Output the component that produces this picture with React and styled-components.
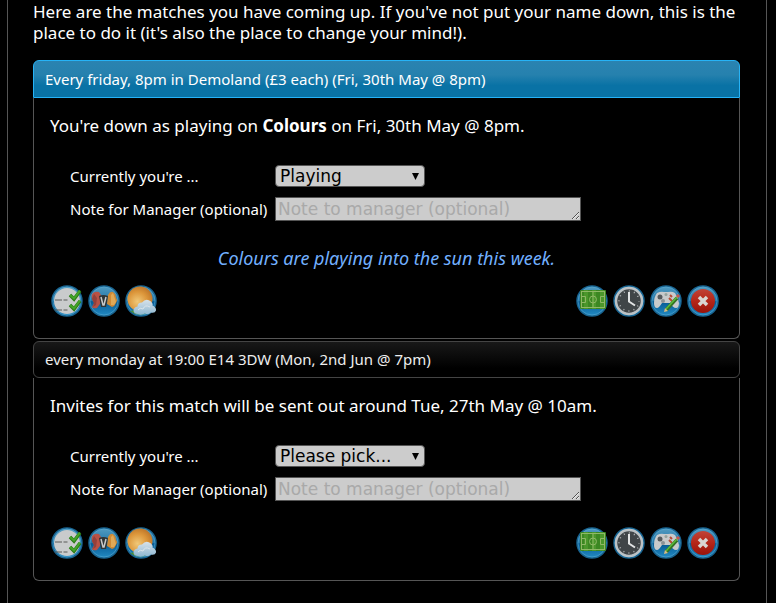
import React from "react";
import styled, { createGlobalStyle, css } from "styled-components";

const GlobalStyle = createGlobalStyle`
  *, *::before, *::after { box-sizing: border-box; }
  html { background: #000; }
  body {
    margin: 0;
    background: #000;
    color: #fff;
    font-family: "Noto Sans", "Open Sans", sans-serif;
    font-size: 17px;
  }
`;

const Page = styled.main`
  min-height: 100vh;
  margin: 0 9px 0 7px;
  padding: 1px 26px 22px 25px;
  border: solid #555;
  border-width: 0 1px;
`;

const Intro = styled.p`
  margin: 0 0 17px;
  line-height: 21px;
`;

const Matches = styled.div`
  display: flex;
  flex-direction: column;
  gap: 2px;
`;

const Match = styled.section``;

const MatchHeader = styled.h2`
  margin: 0;
  padding: 0 11px;
  font-size: 15px;
  font-weight: 400;
  line-height: 35px;
  border: 1px solid #444;
  border-radius: 6px;
  background: linear-gradient(#181818, #000 75%);
  color: #eee;

  ${(p) =>
    p.$active &&
    css`
      line-height: 36px;
      border-color: #26b3f7;
      border-radius: 6px 6px 0 0;
      background: linear-gradient(#2a83b1 0%, #2681ae 38%, #0972a5 68%, #0972a5 100%);
      color: #fff;
    `}
`;

const MatchBody = styled.div`
  padding: 17px 16px 20px;
  border: 1px solid #555;
  border-top: 0;
  border-radius: 0 0 6px 6px;
`;

const Summary = styled.p`
  margin: 0;
  line-height: 22px;
`;

const Form = styled.form`
  display: grid;
  grid-template-columns: 205px 1fr;
  row-gap: 10px;
  align-items: center;
  margin: 28px 0 0 20px;
`;

const Label = styled.label`
  font-size: 15px;
  line-height: 22px;
  white-space: nowrap;
`;

const SelectWrap = styled.div`
  display: grid;
  width: 150px;
  align-items: center;

  > * { grid-area: 1 / 1; }
  > svg { justify-self: end; margin-right: 6px; pointer-events: none; }
`;

const fieldFont = css`
  font-family: "DejaVu Sans", sans-serif;
  font-size: 17px;
  color: #000;
  background: #ccc;
`;

const Select = styled.select`
  ${fieldFont}
  appearance: none;
  width: 100%;
  height: 22px;
  margin: 0;
  padding: 0 20px 0 4px;
  border: 1px solid #555;
  border-radius: 4px;
  line-height: 20px;
`;

const Note = styled.textarea`
  ${fieldFont}
  display: block;
  width: 306px;
  max-width: 100%;
  height: 24px;
  margin: 0;
  padding: 1px 2px;
  border: 1px solid #555;
  border-radius: 0;
  line-height: 20px;
  overflow: hidden;

  &::placeholder { color: #a9a9a9; opacity: 1; }
`;

const Notice = styled.p`
  margin: 26px 0 -10px;
  font-size: 18px;
  line-height: 22px;
  text-align: center;
  font-style: italic;
  color: #72b0ff;
`;

const Actions = styled.div`
  display: flex;
  justify-content: space-between;
  margin: 25px 3px 0 0;
`;

const ActionGroup = styled.div`
  display: flex;
  gap: 3px;
`;

const IconButton = styled.button`
  width: 34px;
  height: 34px;
  padding: 0;
  border: 0;
  background: none;
  cursor: pointer;

  svg { display: block; }
`;

const HiddenDefs = styled.svg`
  display: block;
  width: 0;
  height: 0;
  overflow: hidden;
`;

const IconPaints = () => (
  <HiddenDefs aria-hidden="true" width="0" height="0">
    <defs>
      <linearGradient id="disc" x1="0" y1="0" x2="0" y2="1">
        <stop offset="0" stopColor="#529bc0" />
        <stop offset=".5" stopColor="#2377aa" />
        <stop offset=".52" stopColor="#075b94" />
        <stop offset="1" stopColor="#238bc4" />
      </linearGradient>
      <radialGradient id="sun" cx=".4" cy=".6" r=".65">
        <stop offset="0" stopColor="#f0c878" />
        <stop offset=".6" stopColor="#dc963a" />
        <stop offset="1" stopColor="#bd7529" />
      </radialGradient>
      <linearGradient id="cloud" x1="0" y1="0" x2="0" y2="1">
        <stop offset="0" stopColor="#d7e2ea" />
        <stop offset="1" stopColor="#8fb8d2" />
      </linearGradient>
      <linearGradient id="red" x1="0" y1="0" x2="0" y2="1">
        <stop offset="0" stopColor="#c04337" />
        <stop offset=".5" stopColor="#b52618" />
        <stop offset="1" stopColor="#99130a" />
      </linearGradient>
    </defs>
  </HiddenDefs>
);

const Disc = ({ children }) => (
  <svg width="34" height="34" viewBox="0 0 34 34" aria-hidden="true">
    <circle cx="17" cy="17" r="15" fill="url(#disc)" stroke="#186491" strokeWidth="1.5" />
    <circle cx="17" cy="17" r="14" fill="none" stroke="#5aabd2" strokeWidth=".8" opacity=".7" />
    {children}
  </svg>
);

const ChecklistIcon = () => (
  <Disc>
    <circle cx="17" cy="17" r="13" fill="#c9cbcc" />
    <path d="M5 16h7M13.500 16h4M5 26h7M13.500 26h4" stroke="#5b5b59" strokeWidth="1" />
    <path d="M20 11l4 4 6-8M20 21l4 4 6-8" fill="none" stroke="#2a7917" strokeWidth="3.500" />
    <path d="M20 11l4 3.500 6-8M20 21l4 3.500 6-8" fill="none" stroke="#43a528" strokeWidth="2" />
  </Disc>
);

const TeamsIcon = () => (
  <Disc>
    <path d="M6 9q3-2 6-1l2 3-1 9-3 4q-4 1-5-1l2-4-2-4q-1-4 1-6z" fill="#b95145" />
    <path d="M7 10l3 4-1 7-3 2 1-4-2-4z" fill="#94403b" />
    <path d="M21 11q2-4 5-3 3 2 3 6 2 2 0 5-1 3-4 4l-5-3z" fill="#cf8a35" />
    <path d="M24 11l2-2 2 6 1 3-2 3-3 0z" fill="#dfa957" />
    <path d="M12 12q4-2 9 0l-2 11h-5z" fill="#303536" />
    <path d="M14 13l2 8h1l2-8" fill="none" stroke="#c7cacb" strokeWidth="1.500" />
  </Disc>
);

const WeatherIcon = () => (
  <Disc>
    <path d="M6 27q8 6 17 2l-6-4z" fill="#498c39" />
    <circle cx="16" cy="15" r="12.5" fill="url(#sun)" />
    <path
      d="M14 30q-4 0-4.500-3 0-4 4-4.500 0-4 4.500-4 4-5 9-1 2 2 1.500 4 4 2 3.500 5-1 3-5 2-3 3-6 1-4 2-7 .5z"
      fill="url(#cloud)"
    />
    <path d="M14 26q2-3 5-1 2-5 7-2" fill="none" stroke="#dbe5eb" strokeWidth="1" />
  </Disc>
);

const PitchIcon = () => (
  <Disc>
    <rect x="5" y="6" width="26" height="19" rx="1" fill="#3c8722" />
    <path d="M9 6h4v19H9zM17 6h4v19h-4zM25 6h4v19h-4z" fill="#4b972b" />
    <g fill="none" stroke="#8fb866" strokeWidth="1">
      <rect x="6.5" y="7.5" width="23" height="16" />
      <path d="M18 7v17M6 12.5h4.500v6H6M30 12.5h-4.500v6H30" />
      <circle cx="18" cy="15.500" r="3.500" />
    </g>
  </Disc>
);

const ClockIcon = () => (
  <Disc>
    <circle cx="17" cy="17" r="13" fill="#404548" stroke="#bcc2c5" strokeWidth="2.500" />
    <circle
      cx="17"
      cy="17"
      r="10"
      fill="none"
      stroke="#b6babc"
      strokeWidth="1.500"
      strokeDasharray="1 4.236"
      strokeDashoffset=".5"
    />
    <path d="M17 8v9.500l6 4" fill="none" stroke="#e2e4e5" strokeWidth="2" />
  </Disc>
);

const GamepadIcon = () => (
  <Disc>
    <path
      d="M8 9q4-2 7-1h4q4-1 7 1 3 4 4 10 0 5-3 5-3 0-6-5h-8q-3 5-5 5-3 0-3-5 0-6 3-10z"
      fill="#c8cacb"
    />
    <circle cx="11" cy="13" r="2.500" fill="#555a5d" />
    <circle cx="17" cy="10.500" r="1.500" fill="#94a29c" />
    <circle cx="14" cy="17" r="2" fill="#8c9295" />
    <path d="M20 14l3 3M21 11l2 2" stroke="#b64b35" strokeWidth="2" />
    <path d="M17 26l11-12" stroke="#327224" strokeWidth="3.500" />
    <path d="M17 25l11-12" stroke="#5bbb39" strokeWidth="1.500" />
    <path d="M15 28l1-4 3 3z" fill="#d8bc83" />
    <path d="M28 13l2-2" stroke="#c6584b" strokeWidth="3" />
  </Disc>
);

const CancelIcon = () => (
  <Disc>
    <circle cx="17" cy="17" r="12" fill="url(#red)" />
    <path d="M13 13l8 8M21 13l-8 8" stroke="#d9d6d2" strokeWidth="3.500" />
  </Disc>
);

const infoActions = [
  ["Availability", ChecklistIcon],
  ["Teams", TeamsIcon],
  ["Weather", WeatherIcon],
];

const manageActions = [
  ["Pitch", PitchIcon],
  ["Match time", ClockIcon],
  ["Edit match", GamepadIcon],
  ["Cancel match", CancelIcon],
];

const IconBar = ({ items }) => (
  <ActionGroup>
    {items.map(([name, Icon]) => (
      <IconButton key={name} type="button" aria-label={name}>
        <Icon />
      </IconButton>
    ))}
  </ActionGroup>
);

function MatchCard({ id, title, active, status, notice, children }) {
  return (
    <Match>
      <MatchHeader $active={active}>{title}</MatchHeader>
      <MatchBody>
        <Summary>{children}</Summary>
        <Form>
          <Label htmlFor={`${id}-status`}>Currently you're ...</Label>
          <SelectWrap>
            <Select id={`${id}-status`} defaultValue={status}>
              <option>Please pick...</option>
              <option>Playing</option>
              <option>Not playing</option>
            </Select>
            <svg width="7" height="7" viewBox="0 0 7 7" aria-hidden="true">
              <path d="M0 0h7L3.500 7z" fill="#000" />
            </svg>
          </SelectWrap>
          <Label htmlFor={`${id}-note`}>Note for Manager (optional)</Label>
          <Note id={`${id}-note`} rows={1} placeholder="Note to manager (optional)" />
        </Form>
        {notice && <Notice>{notice}</Notice>}
        <Actions>
          <IconBar items={infoActions} />
          <IconBar items={manageActions} />
        </Actions>
      </MatchBody>
    </Match>
  );
}

export default function App() {
  return (
    <>
      <GlobalStyle />
      <IconPaints />
      <Page>
        <Intro>
          Here are the matches you have coming up. If you've not put your name down, this is the
          place to do it (it's also the place to change your mind!).
        </Intro>
        <Matches>
          <MatchCard
            id="friday"
            active
            title="Every friday, 8pm in Demoland (£3 each) (Fri, 30th May @ 8pm)"
            status="Playing"
            notice="Colours are playing into the sun this week."
          >
            You're down as playing on <strong>Colours</strong> on Fri, 30th May @ 8pm.
          </MatchCard>
          <MatchCard
            id="monday"
            title="every monday at 19:00 E14 3DW (Mon, 2nd Jun @ 7pm)"
            status="Please pick..."
          >
            Invites for this match will be sent out around Tue, 27th May @ 10am.
          </MatchCard>
        </Matches>
      </Page>
    </>
  );
}
